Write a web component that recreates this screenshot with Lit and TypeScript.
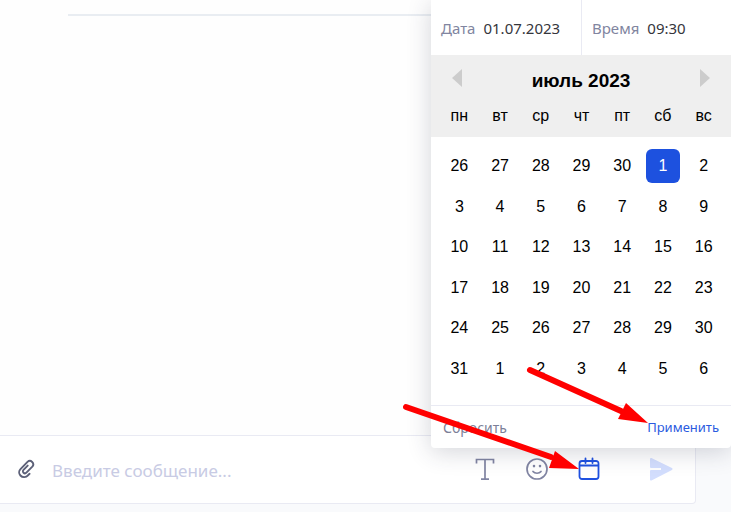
import { LitElement, html, css, svg } from "lit";
import { customElement, state } from "lit/decorators.js";
import { classMap } from "lit/directives/class-map.js";

const WEEKDAYS = ["пн", "вт", "ср", "чт", "пт", "сб", "вс"];
const WEEKS = [
  [26, 27, 28, 29, 30, 1, 2],
  [3, 4, 5, 6, 7, 8, 9],
  [10, 11, 12, 13, 14, 15, 16],
  [17, 18, 19, 20, 21, 22, 23],
  [24, 25, 26, 27, 28, 29, 30],
  [31, 1, 2, 3, 4, 5, 6],
];

@customElement("schedule-picker")
export class SchedulePicker extends LitElement {
  @state() private selected = "0-5";

  static styles = css`
    :host {
      display: flex;
      flex-direction: column;
      background: #fff;
      border-radius: 0 0 4px 4px;
      box-shadow: 0 4px 24px rgba(40, 44, 70, 0.2);
      font-family: "Noto Sans", sans-serif;
    }
    * { box-sizing: border-box; }
    button {
      border: 0;
      padding: 0;
      background: none;
      font: inherit;
      color: inherit;
      cursor: pointer;
    }
    .fields {
      display: grid;
      grid-template-columns: 1fr 1fr;
      height: 55px;
    }
    .field {
      display: flex;
      align-items: center;
      gap: 8px;
      padding: 0 0 0 10px;
      font-size: 15px;
      color: #8185a0;
      min-width: 0;
    }
    .field + .field { border-left: 1px solid #e9eaf3; }
    .field input {
      flex: 1;
      min-width: 0;
      width: 0;
      border: 0;
      padding: 0;
      outline: 0;
      background: none;
      font: inherit;
      color: #35363c;
    }
    .month {
      display: flex;
      align-items: center;
      justify-content: space-between;
      height: 51px;
      padding: 0 20px;
      background: #efefef;
      font-family: "Liberation Sans", Arial, sans-serif;
    }
    h2 {
      margin: 0;
      font-size: 19px;
      line-height: 24px;
      font-weight: 700;
      color: #000;
    }
    .nav {
      display: flex;
      width: 12px;
      height: 24px;
      justify-content: center;
    }
    .nav svg { width: 10px; height: 18px; fill: #ccc; }
    table {
      display: block;
      font: 16px/20px "Liberation Sans", Arial, sans-serif;
      color: #000;
    }
    thead {
      display: block;
      height: 31px;
      padding: 0 7px 0 8px;
      background: #efefef;
    }
    tr { display: grid; grid-template-columns: repeat(7, 1fr); }
    th { padding: 0; font-weight: 400; text-align: center; }
    tbody {
      display: grid;
      grid-template-rows: repeat(6, 1fr);
      height: 268px;
      padding: 9px 7px 16px 8px;
    }
    td { display: flex; align-items: center; justify-content: center; padding: 0; }
    .day { width: 34px; height: 34px; border-radius: 6px; }
    .day.on { background: #1d51df; color: #fff; }
    footer {
      display: flex;
      align-items: center;
      justify-content: space-between;
      height: 43px;
      padding: 0 12px;
      border-top: 1px solid #e9eaf3;
      font-size: 14px;
      color: #7c8098;
    }
    .apply { font-size: 13px; color: #2a5be0; }
  `;

  render() {
    return html`
      <div class="fields">
        <label class="field">Дата<input type="text" value="01.07.2023" /></label>
        <label class="field">Время<input type="text" value="09:30" /></label>
      </div>
      <div class="month">
        <button class="nav" aria-label="Предыдущий месяц">
          <svg viewBox="0 0 10 18"><path d="M10 0v18L0 9z" /></svg>
        </button>
        <h2>июль 2023</h2>
        <button class="nav" aria-label="Следующий месяц">
          <svg viewBox="0 0 10 18"><path d="M0 0v18l10-9z" /></svg>
        </button>
      </div>
      <table>
        <thead>
          <tr>${WEEKDAYS.map((d) => html`<th scope="col">${d}</th>`)}</tr>
        </thead>
        <tbody>
          ${WEEKS.map(
            (week, w) => html`<tr>
              ${week.map((day, d) => {
                const id = `${w}-${d}`;
                return html`<td>
                  <button
                    class=${classMap({ day: true, on: id === this.selected })}
                    @click=${() => (this.selected = id)}
                  >${day}</button>
                </td>`;
              })}
            </tr>`
          )}
        </tbody>
      </table>
      <footer>
        <button>Сбросить</button>
        <button class="apply">Применить</button>
      </footer>
    `;
  }
}

const clip = svg`<path stroke-width="1.9" d="M13.6 14.800 12 16.300a5 5 0 0 1-7.600.2 4.600 4.600 0 0 1 .1-6.400l7-7.200a3.400 3.400 0 0 1 4.800 4.800l-5.900 6a2 2 0 0 1-2.900-2.800l4.200-4.300" />`;

@customElement("app-root")
export class AppRoot extends LitElement {
  static styles = css`
    :host {
      display: flex;
      flex-direction: column;
      position: relative;
      min-height: 100vh;
      box-sizing: border-box;
      padding: 0 35px 8px 0;
      overflow: hidden;
      background: #f9fafc;
      font-family: "Noto Sans", sans-serif;
    }
    * { box-sizing: border-box; }
    .feed {
      flex: 1;
      padding: 14px 0 0 68px;
      background: #fefefe;
    }
    .feed hr { margin: 0; border: 0; height: 2px; background: #e9edf2; }
    .composer {
      display: flex;
      align-items: center;
      height: 69px;
      padding: 0 22px 2px 16px;
      background: #fff;
      border: 1px solid #e9eaf3;
      border-left: 0;
      border-radius: 0 0 4px 0;
    }
    button {
      display: flex;
      border: 0;
      padding: 0;
      background: none;
      color: #8084a2;
      cursor: pointer;
    }
    button svg {
      width: 24px;
      height: 24px;
      fill: none;
      stroke: currentColor;
      stroke-width: 2;
      stroke-linecap: round;
      stroke-linejoin: round;
    }
    .attach { color: #5c6078; }
    .attach svg { width: 20px; height: 20px; }
    .message {
      flex: 1;
      min-width: 0;
      margin: 0 16px;
      border: 0;
      padding: 4px 0 0;
      outline: 0;
      background: none;
      font: 17px/24px "Noto Sans", sans-serif;
      color: #35363c;
    }
    .message::placeholder { color: #c8cbe4; opacity: 1; }
    .tools { display: flex; gap: 28px; margin-right: 48px; }
    .active { color: #1f51e0; }
    .send svg { fill: #d3defe; stroke: #d3defe; }
    schedule-picker {
      position: absolute;
      right: 0;
      bottom: 64px;
      width: 300px;
    }
    .pointers {
      position: absolute;
      right: 0;
      bottom: 0;
      width: 340px;
      height: 160px;
      pointer-events: none;
      fill: #f00;
      stroke: #f00;
    }
    .shaft { stroke-width: 6; stroke-linecap: round; }
    .head { stroke: none; }
  `;

  render() {
    return html`
      <main class="feed"><hr /></main>
      <form class="composer" @submit=${(e: Event) => e.preventDefault()}>
        <button type="button" class="attach" aria-label="Прикрепить файл">
          <svg viewBox="0 0 20 20">${clip}</svg>
        </button>
        <input class="message" type="text" aria-label="Сообщение" placeholder="Введите сообщение..." />
        <div class="tools">
          <button type="button" aria-label="Форматирование">
            <svg viewBox="0 0 24 24"><path stroke-width="1.7" stroke-linecap="butt" stroke-linejoin="miter" d="M3.500 6.500V2.500h17v4M12 2.500v20M8 22.200h8" /></svg>
          </button>
          <button type="button" aria-label="Эмодзи">
            <svg viewBox="0 0 24 24">
              <circle cx="12" cy="12" r="10" stroke-width="1.7" />
              <path stroke-width="1.7" d="M8 14.500c1.800 2.300 6.200 2.300 8 0" />
              <path stroke-width="2.6" d="M9 9v.1M15 9v.1" />
            </svg>
          </button>
          <button type="button" class="active" aria-label="Запланировать">
            <svg viewBox="0 0 24 24"><path stroke-width="1.8" d="M5 4h14a2.500 2.500 0 0 1 2.500 2.500v13a2.500 2.500 0 0 1-2.500 2.500H5a2.500 2.500 0 0 1-2.500-2.500v-13A2.500 2.500 0 0 1 5 4zM2.500 8.500h19M8.500 1.500v4.500M15.500 1.500v4.500" /></svg>
          </button>
        </div>
        <button class="send" aria-label="Отправить">
          <svg viewBox="0 0 24 24"><path stroke-width="2" d="M2 2 22.500 12 2 22.500V14h11v-4H2z" /></svg>
        </button>
      </form>
      <schedule-picker></schedule-picker>
      <svg class="pointers" viewBox="0 0 340 160" aria-hidden="true">
        <path class="shaft" d="M139 18 230 59M15 55l145 50" />
        <path class="head" d="M257 71 227 67l8-16zM188 117l-30-1 6-17z" />
      </svg>
    `;
  }
}
